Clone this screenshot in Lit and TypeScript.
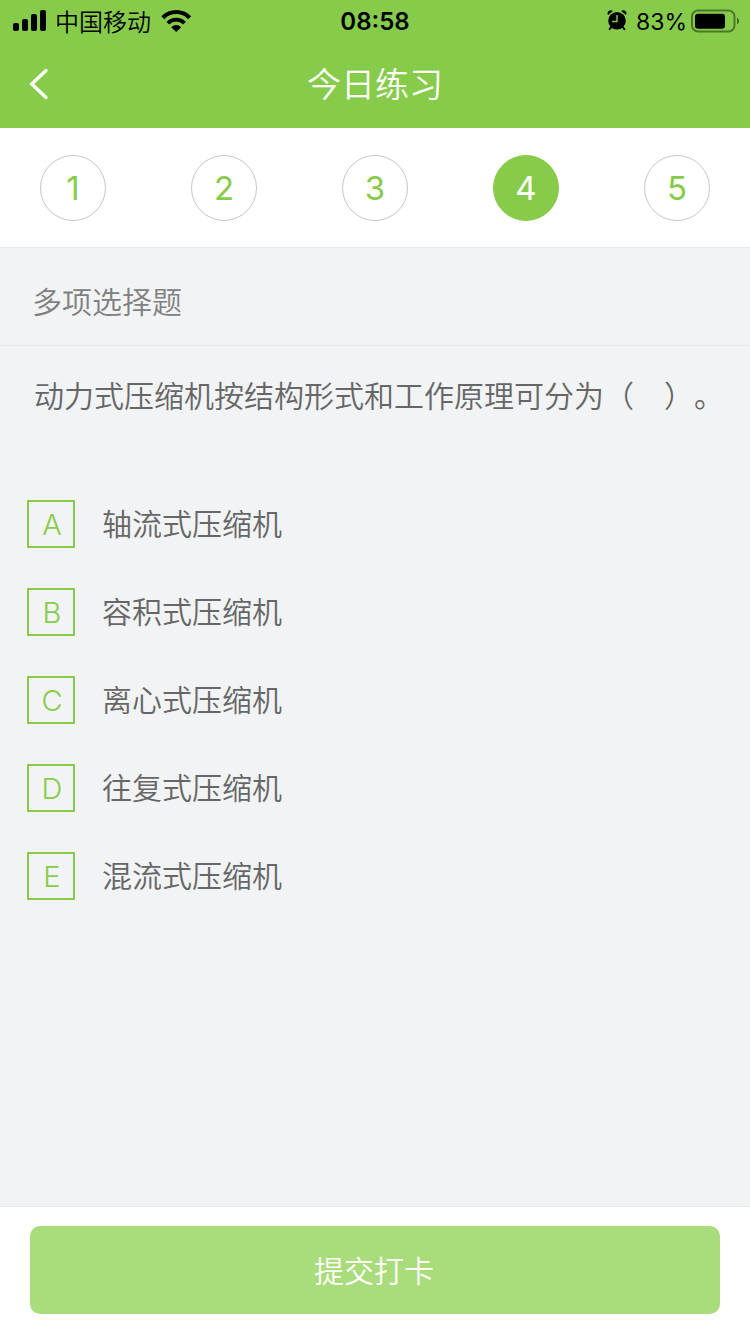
import { LitElement, html, css } from "lit";
import { customElement, property, state } from "lit/decorators.js";
import { classMap } from "lit/directives/class-map.js";

interface Option {
  key: string;
  text: string;
}

@customElement("status-bar")
class StatusBar extends LitElement {
  static styles = css`
    :host {
      display: grid;
      grid-template-columns: 1fr auto 1fr;
      align-items: center;
      height: 40px;
      padding: 0 12px;
      color: #000;
      font-size: 24px;
      line-height: 38px;
    }
    svg {
      display: block;
      flex: none;
    }
    .side {
      display: flex;
      align-items: center;
    }
    .left {
      gap: 9px;
    }
    .right {
      justify-content: flex-end;
      margin-right: -2px;
    }
    .carrier,
    .time,
    .percent {
      padding-top: 2px;
    }
    .carrier {
      padding-top: 4px;
    }
    .percent {
      margin: 0 4px 0 9px;
      font-size: 23px;
      font-weight: 400;
    }
    .time {
      font-weight: 600;
    }
  `;

  render() {
    return html`
      <div class="side left">
        <svg width="34" height="22" viewBox="0 0 34 22" aria-hidden="true">
          <rect x="1" y="13" width="6" height="8" rx="2" />
          <rect x="10" y="9" width="6" height="12" rx="2" />
          <rect x="19" y="4" width="6" height="17" rx="2" />
          <rect x="28" y="0" width="6" height="21" rx="2" />
        </svg>
        <span class="carrier">中国移动</span>
        <svg width="32" height="24" viewBox="0 0 32 24" aria-hidden="true">
          <path d="M2.8 8.7A18.6 18.6 0 0 1 29.6 8.7" fill="none" stroke="#000" stroke-width="4.2" />
          <path d="M7.9 14.3A11.4 11.4 0 0 1 24.5 14.3" fill="none" stroke="#000" stroke-width="3.8" />
          <path d="M16.2 23L11.2 18.2A7 7 0 0 1 21.2 18.2Z" />
        </svg>
      </div>
      <div class="time">08:58</div>
      <div class="side right">
        <svg width="20" height="22" viewBox="0 0 20 22" aria-hidden="true">
          <circle cx="10" cy="10.8" r="8.8" />
          <path d="M4.2 17L2.6 19.3M15.8 17L17.4 19.3" stroke="#000" stroke-width="2" stroke-linecap="round" />
          <path d="M1 4.9A3.2 3.2 0 0 1 5.8 .9ZM19 4.9A3.2 3.2 0 0 0 14.2 .9Z" />
          <path d="M10 5V11.5H5.2" fill="none" stroke="#86cc4a" stroke-width="1.4" />
        </svg>
        <span class="percent">83%</span>
        <svg width="49" height="24" viewBox="0 0 49 24" aria-hidden="true">
          <rect x="1" y="1.5" width="42.5" height="21" rx="6" fill="none" stroke="#000" stroke-opacity=".42" stroke-width="2" />
          <rect x="4" y="4.8" width="30" height="15" rx="3" />
          <path d="M46 8.5C48.8 10 48.8 14 46 15.5Z" fill-opacity=".5" />
        </svg>
      </div>
    `;
  }
}

@customElement("question-steps")
class QuestionSteps extends LitElement {
  @property({ type: Number }) count = 5;
  @property({ type: Number }) current = 1;

  static styles = css`
    :host {
      display: flex;
      justify-content: space-between;
      padding: 27px 40px 26px;
      background: #fff;
      border-bottom: 1px solid #e9e9ea;
    }
    .step {
      box-sizing: border-box;
      width: 66px;
      height: 66px;
      padding: 0;
      border: 1px solid #c6c6c6;
      border-radius: 50%;
      background: #fff;
      color: #86cc4a;
      font: inherit;
      font-size: 33px;
      font-weight: 400;
      line-height: 64px;
    }
    .current {
      border-color: #86cc4a;
      background: #86cc4a;
      color: #fff;
    }
  `;

  render() {
    return Array.from({ length: this.count }, (_, i) => i + 1).map(
      (n) => html`<button
        type="button"
        class=${classMap({ step: true, current: n === this.current })}
        @click=${() => this.dispatchEvent(new CustomEvent("step", { detail: n }))}
      >${n}</button>`
    );
  }
}

@customElement("option-row")
class OptionRow extends LitElement {
  @property() key = "";
  @property() text = "";

  static styles = css`
    :host {
      display: block;
    }
    .row {
      display: flex;
      align-items: center;
      gap: 27px;
      cursor: pointer;
    }
    .mark {
      display: grid;
      flex: none;
      color: #86cc4a;
      font-size: 29px;
      line-height: 46px;
      text-align: center;
    }
    .box,
    .key {
      grid-area: 1 / 1;
    }
    .box {
      appearance: none;
      box-sizing: border-box;
      width: 48px;
      height: 48px;
      margin: 0;
      border: 2px solid #86cc4a;
    }
    .box:checked {
      background: #86cc4a;
    }
    .box:checked + .key {
      color: #fff;
    }
    .key {
      z-index: 1;
      padding: 2px 0 0 2px;
    }
    .text {
      font-size: 30px;
      line-height: 46px;
    }
  `;

  render() {
    return html`
      <label class="row">
        <span class="mark">
          <input class="box" type="checkbox" name="answer" .value=${this.key} />
          <span class="key">${this.key}</span>
        </span>
        <span class="text">${this.text}</span>
      </label>
    `;
  }
}

@customElement("app-root")
class AppRoot extends LitElement {
  @state() private current = 4;

  private options: Option[] = [
    { key: "A", text: "轴流式压缩机" },
    { key: "B", text: "容积式压缩机" },
    { key: "C", text: "离心式压缩机" },
    { key: "D", text: "往复式压缩机" },
    { key: "E", text: "混流式压缩机" },
  ];

  static styles = css`
    :host {
      display: flex;
      flex-direction: column;
      min-height: 100vh;
      background: #f2f3f5;
      color: #666;
      font-family: Inter, "Noto Sans CJK SC", sans-serif;
      font-weight: 350;
      text-spacing-trim: space-all;
    }
    .top {
      background: #86cc4a;
    }
    .nav {
      display: grid;
      grid-template-columns: 1fr auto 1fr;
      align-items: center;
      height: 88px;
      padding: 0 28px;
      color: #fff;
    }
    .back {
      justify-self: start;
      padding: 0;
      border: 0;
      background: none;
      color: inherit;
    }
    .back svg {
      display: block;
    }
    .title {
      margin: 0;
      padding-top: 2px;
      font-size: 34px;
      font-weight: inherit;
      line-height: 48px;
    }
    .type {
      margin: 0;
      padding: 30px 32px 19px;
      border-bottom: 1px solid #e9e9ea;
      color: #808080;
      font-size: 30px;
      font-weight: inherit;
      line-height: 48px;
    }
    .main {
      flex: 1;
    }
    .question {
      margin: 0;
      padding: 26px 16px 0 34px;
      font-size: 30px;
      line-height: 48px;
    }
    .options {
      display: grid;
      gap: 40px;
      padding: 80px 27px 40px;
    }
    .footer {
      padding: 19px 30px 20px;
      border-top: 1px solid #e9e9ea;
      background: #fff;
    }
    .submit {
      display: block;
      width: 100%;
      height: 88px;
      padding: 0 2px 2px 0;
      border: 0;
      border-radius: 10px;
      background: #a9dc7a;
      color: #fff;
      font: inherit;
      font-size: 30px;
    }
  `;

  render() {
    return html`
      <header class="top">
        <status-bar></status-bar>
        <div class="nav">
          <button class="back" type="button" aria-label="返回">
            <svg width="22" height="32" viewBox="0 0 22 32">
              <path d="M18 2.5L3.8 16L18 29.5" fill="none" stroke="#fff" stroke-width="3.4" stroke-linecap="round" />
            </svg>
          </button>
          <h1 class="title">今日练习</h1>
        </div>
      </header>
      <question-steps
        .current=${this.current}
        @step=${(e: CustomEvent<number>) => (this.current = e.detail)}
      ></question-steps>
      <main class="main">
        <h2 class="type">多项选择题</h2>
        <p class="question">动力式压缩机按结构形式和工作原理可分为（　）。</p>
        <div class="options">
          ${this.options.map((o) => html`<option-row .key=${o.key} .text=${o.text}></option-row>`)}
        </div>
      </main>
      <footer class="footer">
        <button class="submit" type="button">提交打卡</button>
      </footer>
    `;
  }
}
